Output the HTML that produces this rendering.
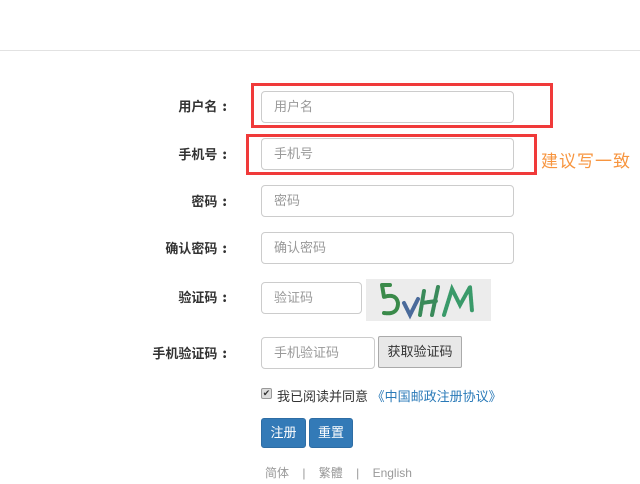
<!DOCTYPE html>
<html><head><meta charset="utf-8"><style>
*{box-sizing:border-box;margin:0;padding:0}
body{width:640px;height:484px;background:#fff;position:relative;overflow:hidden;font-family:"Liberation Sans","Noto Sans CJK SC",sans-serif;font-size:13px;color:#333}
.hr{position:absolute;left:0;top:50px;width:640px;height:1px;background:#e2e2e2}
.lbl{position:absolute;right:413px;font-weight:bold;font-size:13px;color:#333;text-align:right;white-space:nowrap}
.lbl b{display:inline-block;margin-left:5px;font-family:"Noto Sans CJK SC",sans-serif}
.in{position:absolute;left:261px;width:253px;height:32px;border:1px solid #ccc;border-radius:4px;padding-left:12px;line-height:30px;color:#999;font-size:13px}
.red{position:absolute;border:3px solid #f03a3a}
.btn{position:absolute;background:#337ab7;border:1px solid #2e6da4;border-radius:3px;color:#fff;text-align:center;line-height:28px;font-size:13px}
</style></head><body>
<div class="hr"></div>
<div class="lbl" style="top:96px">用户名<b>:</b></div>
<div class="in" style="top:91px">用户名</div>
<div class="red" style="left:251px;top:83px;width:302px;height:45px"></div>
<div class="lbl" style="top:144px">手机号<b>:</b></div>
<div class="in" style="top:138px">手机号</div>
<div class="red" style="left:246px;top:134px;width:291px;height:41px"></div>
<div style="position:absolute;left:541px;top:147px;color:#f7953f;font-size:17px;letter-spacing:1px">建议写一致</div>
<div class="lbl" style="top:191px">密码<b>:</b></div>
<div class="in" style="top:185px">密码</div>
<div class="lbl" style="top:238px">确认密码<b>:</b></div>
<div class="in" style="top:232px">确认密码</div>
<div class="lbl" style="top:287px">验证码<b>:</b></div>
<div class="in" style="top:282px;width:101px">验证码</div>
<div style="position:absolute;left:366px;top:279px;width:125px;height:42px;background:#ececec">
<svg width="125" height="42"><g fill="none" stroke-width="4" stroke-linecap="round" stroke-dasharray="2 1">
<path d="M24 6 L16 6 L18 18 Q30 14 32 24 Q32 36 18 34" stroke="#3a8a4a"/>
<path d="M38 24 L44 36 L52 20" stroke="#4a6a9a"/>
<path d="M58 12 L54 36 M56 24 L70 22 M72 8 L66 36" stroke="#3a8a5a"/>
<path d="M78 36 L86 10 L94 26 L104 8 L106 32" stroke="#3a9a6a"/></g></svg></div>
<div class="lbl" style="top:343px">手机验证码<b>:</b></div>
<div class="in" style="top:337px;width:114px">手机验证码</div>
<div style="position:absolute;left:378px;top:336px;width:84px;height:32px;border:1px solid #aaa;background:#e8e8e8;border-radius:2px;text-align:center;line-height:30px;font-size:13px;color:#333">获取验证码</div>
<div style="position:absolute;left:261px;top:388px;width:11px;height:11px;border:1px solid #999;background:#ddd;border-radius:2px;font-size:9px;line-height:9px;text-align:center">✔</div>
<div style="position:absolute;left:277px;top:386px;font-size:13px">我已阅读并同意 <span style="color:#2a7ab8">《中国邮政注册协议》</span></div>
<div class="btn" style="left:261px;top:418px;width:45px;height:30px">注册</div>
<div class="btn" style="left:309px;top:418px;width:44px;height:30px">重置</div>
<div style="position:absolute;left:265px;top:464px;color:#999;font-size:12px;white-space:pre">简体    |    繁體    |    English</div>
</body></html>
